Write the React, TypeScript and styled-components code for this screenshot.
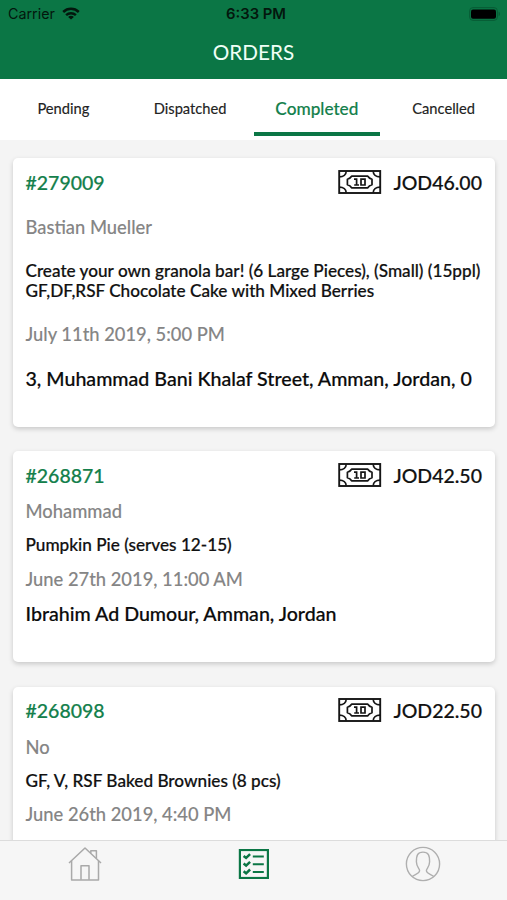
import React from "react";
import styled, { createGlobalStyle } from "styled-components";

const GREEN = "#0b7645";

const GlobalStyle = createGlobalStyle`
  * { box-sizing: border-box; }
  body { margin: 0; background: #f4f4f4; font-family: Lato, "Open Sans", sans-serif; }
`;

const Screen = styled.div`
  width: 507px;
  height: 900px;
  overflow: hidden;
  display: flex;
  flex-direction: column;
  background: #f4f4f4;
`;

const Header = styled.header`
  flex: none;
  height: 79px;
  background: ${GREEN};
`;

const StatusBar = styled.div`
  height: 27px;
  padding: 0 6px 0 8px;
  display: grid;
  grid-template-columns: 1fr auto 1fr;
  align-items: center;
  font-family: Inter, "Liberation Sans", sans-serif;
  font-size: 14.3px;
  color: #03170d;
`;

const Carrier = styled.div`
  display: flex;
  align-items: center;
  gap: 7px;
`;

const Clock = styled.div`
  font-weight: 600;
  font-size: 14.8px;
  padding-left: 3px;
`;

const BatterySlot = styled.div`
  display: flex;
  justify-content: flex-end;
`;

const Title = styled.h1`
  margin: 0;
  height: 50px;
  line-height: 50px;
  text-align: center;
  font-size: 20.7px;
  font-weight: 400;
  color: #f0fff6;
`;

const Tabs = styled.nav`
  flex: none;
  height: 61px;
  padding-bottom: 4px;
  display: grid;
  grid-template-columns: repeat(4, 1fr);
  background: #fff;
`;

const Tab = styled.button<{ $active?: boolean }>`
  border: 0;
  border-bottom: 4px solid ${(p) => (p.$active ? GREEN : "transparent")};
  padding: ${(p) => (p.$active ? 6 : 5)}px 0 0;
  background: none;
  font-family: inherit;
  font-size: ${(p) => (p.$active ? 17.2 : 14.7)}px;
  font-weight: ${(p) => (p.$active ? 500 : 400)};
  -webkit-text-stroke: 0.15px currentColor;
  color: ${(p) => (p.$active ? "#14804c" : "#222")};
`;

const List = styled.main`
  flex: 1;
  min-height: 0;
  overflow: hidden;
  padding: 18px 12px 0 13px;
  display: flex;
  flex-direction: column;
  gap: 24.4px;
`;

const Card = styled.article<{ $height: number; $gap: number }>`
  flex: none;
  height: ${(p) => p.$height}px;
  padding: 12.5px 13px 0 12.5px;
  display: flex;
  flex-direction: column;
  gap: ${(p) => p.$gap}px;
  border-radius: 5px;
  background: #fff;
  box-shadow: 0 2px 5px rgba(0, 0, 0, 0.18);
  white-space: nowrap;
  -webkit-text-stroke: 0.2px currentColor;
`;

const CardHead = styled.div`
  height: 24px;
  display: flex;
  align-items: center;
  font-size: 19.5px;
  font-weight: 500;
  line-height: 24px;
`;

const OrderId = styled.span`
  flex: 1;
  color: #14804c;
`;

const Price = styled.span`
  margin-left: 11.5px;
  color: #111;
`;

const Muted = styled.div`
  font-size: 18.35px;
  line-height: 22px;
  font-weight: 500;
  color: #858585;
  -webkit-text-stroke-width: 0.1px;
`;

const Items = styled.div`
  margin: 0.8px 0 -0.8px;
  font-size: 17.18px;
  line-height: 20.5px;
  font-weight: 500;
  color: #111;
`;

const Address = styled.div`
  font-size: 19.62px;
  line-height: 24px;
  font-weight: 500;
  color: #0b0b0b;
`;

const TabBar = styled.footer`
  flex: none;
  height: 60px;
  border-top: 1px solid #dcdcdc;
  display: grid;
  grid-template-columns: repeat(3, 1fr);
  justify-items: center;
  background: #f6f6f6;
`;

const BarItem = styled.button`
  width: 44px;
  height: 46px;
  padding: 0;
  border: 0;
  background: none;
  display: flex;
  align-items: center;
  justify-content: center;
`;

const Wifi = () => (
  <svg width="18" height="13" viewBox="0 0 18 13" fill="none" stroke="#03170d" strokeWidth="2.5">
    <path d="M1.2 5C5.7 .8 12.3 .8 16.8 5" />
    <path d="M4.1 8.1c2.8-2.5 7-2.5 9.8 0" />
    <path d="M9 12.6 6.1 9.9c1.6-1.4 4.2-1.4 5.8 0z" fill="#03170d" stroke="none" />
  </svg>
);

const Battery = () => (
  <svg width="32" height="14" viewBox="0 0 32 14">
    <rect x=".6" y=".6" width="27.8" height="12.8" rx="3.4" fill="none" stroke="#075c35" strokeWidth="1" />
    <rect x="2" y="2.4" width="25" height="9.4" rx="2" fill="#000" />
    <path d="M29.6 4.8c1.8.5 1.8 3.9 0 4.4z" fill="#075c35" />
  </svg>
);

const BanknoteSvg = styled.svg`
  flex: none;
  margin-bottom: 2px;
`;

const Banknote = () => (
  <BanknoteSvg width="44" height="26" viewBox="0 0 44 26" fill="none" stroke="#161616" strokeWidth="1.7">
    <rect x="1.2" y="2" width="41" height="22" strokeWidth="1.9" />
    <path d="M8.2 2.2c0 3.4-2.8 5.6-6.800 5.600M35.200 2.200c0 3.400 2.800 5.600 6.800 5.600M8.200 23.800c0-3.400-2.800-5.600-6.800-5.600M35.200 23.800c0-3.400 2.800-5.600 6.800-5.600" />
    <path d="M13.600 7.200h16.200c1 1.700 2.400 2.500 4.200 3v5.600c-1.800.5-3.200 1.300-4.200 3H13.600c-1-1.700-2.400-2.500-4.200-3v-5.600c1.800-.5 3.200-1.300 4.200-3z" strokeLinejoin="round" />
    <path d="M16 10.200h2.600v6M16.200 16h4.800M23 10.200h4v5.800h-4z" strokeWidth="1.700" />
  </BanknoteSvg>
);

const Home = () => (
  <svg width="34" height="34" viewBox="0 0 34 34" fill="none" stroke="#a9a9a9" strokeWidth="1.500" strokeLinejoin="round">
    <path d="M3.600 13.800V33h26.900V13.800" />
    <path d="M1 16 17 1l16 15" />
    <path d="M22.800 6.200V3.700h5.600v7.600M13 32.800V18.700h8v14.100" />
  </svg>
);

const Checklist = () => (
  <svg width="32" height="30" viewBox="0 0 32 30" fill="none" stroke={GREEN}>
    <rect x="1.900" y="1" width="28" height="28" strokeWidth="2.200" />
    <g strokeWidth="2.500">
      <path d="m5.600 6.900 2.500 2 4-3.800M5.600 14.600l2.500 2 4-3.800M5.600 22.300l2.500 2 4-3.800" />
      <path d="M14.800 7.500h11M14.800 15.200h11M14.800 22.900h11" strokeWidth="2" />
    </g>
  </svg>
);

const Profile = () => (
  <svg width="36" height="36" viewBox="0 0 36 36" fill="none" stroke="#afafaf" strokeWidth="1.400">
    <circle cx="18" cy="18" r="16.600" />
    <path d="M7.200 30.600c1.800-2.200 7.400-2.800 7.400-6.200 0-1.800-3.200-3.400-3.200-8.600 0-6.400 1-9.700 6.600-9.700s6.600 3.300 6.600 9.700c0 5.200-3.200 6.800-3.200 8.600 0 3.400 5.600 4 7.400 6.200" />
  </svg>
);

type Order = {
  id: string;
  price: string;
  name: string;
  items: string[];
  date: string;
  address?: string;
  height: number;
  gap: number;
};

const orders: Order[] = [
  {
    id: "#279009",
    price: "JOD46.00",
    name: "Bastian Mueller",
    items: [
      "Create your own granola bar! (6 Large Pieces), (Small) (15ppl)",
      "GF,DF,RSF Chocolate Cake with Mixed Berries",
    ],
    date: "July 11th 2019, 5:00 PM",
    address: "3, Muhammad Bani Khalaf Street, Amman, Jordan, 0",
    height: 269,
    gap: 21.8,
  },
  {
    id: "#268871",
    price: "JOD42.50",
    name: "Mohammad",
    items: ["Pumpkin Pie (serves 12-15)"],
    date: "June 27th 2019, 11:00 AM",
    address: "Ibrahim Ad Dumour, Amman, Jordan",
    height: 211,
    gap: 12.4,
  },
  {
    id: "#268098",
    price: "JOD22.50",
    name: "No",
    items: ["GF, V, RSF Baked Brownies (8 pcs)"],
    date: "June 26th 2019, 4:40 PM",
    height: 211,
    gap: 12.4,
  },
];

const tabs = ["Pending", "Dispatched", "Completed", "Cancelled"];

export default function App() {
  return (
    <Screen>
      <GlobalStyle />
      <Header>
        <StatusBar>
          <Carrier>
            Carrier
            <Wifi />
          </Carrier>
          <Clock>6:33 PM</Clock>
          <BatterySlot>
            <Battery />
          </BatterySlot>
        </StatusBar>
        <Title>ORDERS</Title>
      </Header>
      <Tabs>
        {tabs.map((t) => (
          <Tab key={t} $active={t === "Completed"}>
            {t}
          </Tab>
        ))}
      </Tabs>
      <List>
        {orders.map((o) => (
          <Card key={o.id} $height={o.height} $gap={o.gap}>
            <CardHead>
              <OrderId>{o.id}</OrderId>
              <Banknote />
              <Price>{o.price}</Price>
            </CardHead>
            <Muted>{o.name}</Muted>
            <Items>
              {o.items.map((i) => (
                <div key={i}>{i}</div>
              ))}
            </Items>
            <Muted>{o.date}</Muted>
            {o.address && <Address>{o.address}</Address>}
          </Card>
        ))}
      </List>
      <TabBar>
        <BarItem aria-label="Home">
          <Home />
        </BarItem>
        <BarItem aria-label="Orders">
          <Checklist />
        </BarItem>
        <BarItem aria-label="Profile">
          <Profile />
        </BarItem>
      </TabBar>
    </Screen>
  );
}
